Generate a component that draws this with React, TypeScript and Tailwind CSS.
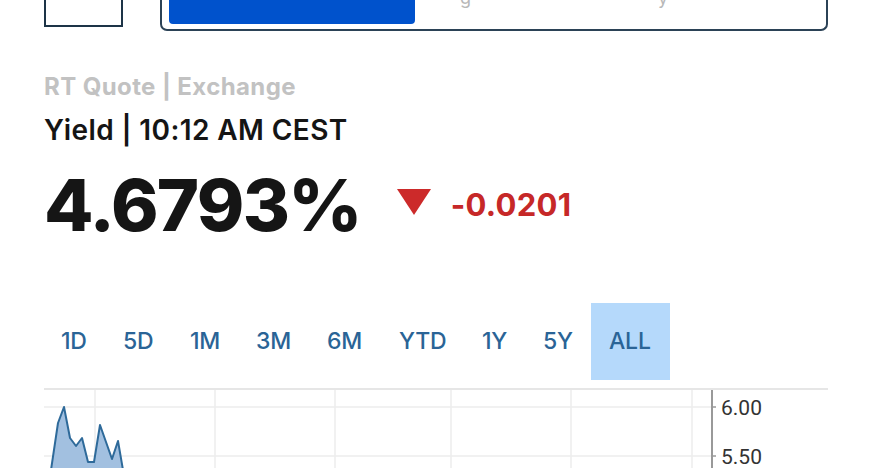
import React from "react";

const tabs: [string, string][] = [
  ["1D", "w-[62px]"],
  ["5D", "w-[67px]"],
  ["1M", "w-[66px]"],
  ["3M", "w-[71px]"],
  ["6M", "w-[72px]"],
  ["YTD", "w-[83px]"],
  ["1Y", "w-[61px]"],
  ["5Y", "w-[65px]"],
  ["ALL", "w-[79px]"],
];

const pts: [number, number][] = [
  [51, 470], [58, 423], [64, 407], [70, 438], [76, 446], [82, 438], [88, 462], [94, 462],
  [100, 425], [106, 442], [112, 459], [118, 441], [123, 470],
];

export default function App() {
  return (
    <div
      className="w-[870px] h-[468px] overflow-hidden bg-white pl-[44px] pr-[42px]"
      style={{ fontFamily: "Inter, Lato, sans-serif" }}
    >
      {/* top cut-off controls */}
      <div className="flex items-start h-[31px]">
        <div className="w-[79px] h-[27px] border-2 border-t-0 border-[#1d3447]" />
        <div className="ml-[37px] flex-1 h-[31px] border-2 border-t-0 border-[#2b4256] rounded-b-[7px] flex items-start px-[7px] relative">
          <div className="w-[246px] h-[24px] bg-[#0052cc] rounded-b-[4px]" />
          <span className="absolute left-[298px] -top-[16px] text-[18px] text-[#b8b8b8]">g</span>
          <span className="absolute left-[496px] -top-[16px] text-[18px] text-[#b8b8b8]">y</span>
        </div>
      </div>

      <div className="mt-[42px] text-[24px] leading-[28px] font-bold text-[#c2c2c2] tracking-[0.4px]">
        RT Quote | Exchange
      </div>
      <div className="mt-[14px] text-[28px] leading-[30px] font-semibold text-[#151515] tracking-[0.4px]">
        Yield | 10:12 AM CEST
      </div>

      <div className="mt-[20px] flex items-center">
        <span className="text-[72px] leading-[80px] font-extrabold text-[#151515] tracking-[-1.7px]">
          4.6793%
        </span>
        <svg width="34" height="26" viewBox="0 0 34 26" className="ml-[36px] -mt-[6px]">
          <polygon points="0,0 34,0 17,26" fill="#cc2a2a" />
        </svg>
        <span className="ml-[20px] text-[31px] leading-[36px] font-bold text-[#c62828] tracking-[0.3px]">
          -0.0201
        </span>
      </div>

      <div className="mt-[58px] flex h-[77px]">
        {tabs.map(([t, w]) => (
          <div
            key={t}
            className={
              w +
              " pl-[17px] flex items-center text-[23px] font-medium text-[#2a6496] tracking-[-0.2px] " +
              (t === "ALL" ? "bg-[#b5d9fb] pl-[18px]" : "")
            }
          >
            {t}
          </div>
        ))}
      </div>

      <div className="mt-[8px] relative h-[80px] border-t-2 border-[#e6e6e6]">
        <svg width="784" height="80" className="absolute left-0 top-0">
          {[51, 171, 291, 407, 527, 648].map((x) => (
            <line key={x} x1={x} y1={0} x2={x} y2={80} stroke="#ececec" strokeWidth="1.5" />
          ))}
          {[17, 66].map((y) => (
            <line key={y} x1={0} y1={y} x2={668} y2={y} stroke="#ececec" strokeWidth="1.5" />
          ))}
          <line x1={668} y1={0} x2={668} y2={80} stroke="#999" strokeWidth="2" />
          <line x1={668} y1={17} x2={672} y2={17} stroke="#999" strokeWidth="1.5" />
          <line x1={668} y1={66} x2={672} y2={66} stroke="#999" strokeWidth="1.5" />
          <polygon
            points={pts.map(([x, y]) => `${x - 44},${y - 390}`).join(" ")}
            fill="#a2c0e0"
            stroke="#2e6a9a"
            strokeWidth="2"
            strokeLinejoin="round"
          />
        </svg>
        <span
          className="absolute left-[677px] top-[6px] text-[21px] leading-[24px] text-[#333]"
          style={{ fontFamily: "Roboto, sans-serif" }}
        >
          6.00
        </span>
        <span
          className="absolute left-[677px] top-[55px] text-[21px] leading-[24px] text-[#333]"
          style={{ fontFamily: "Roboto, sans-serif" }}
        >
          5.50
        </span>
      </div>
    </div>
  );
}
